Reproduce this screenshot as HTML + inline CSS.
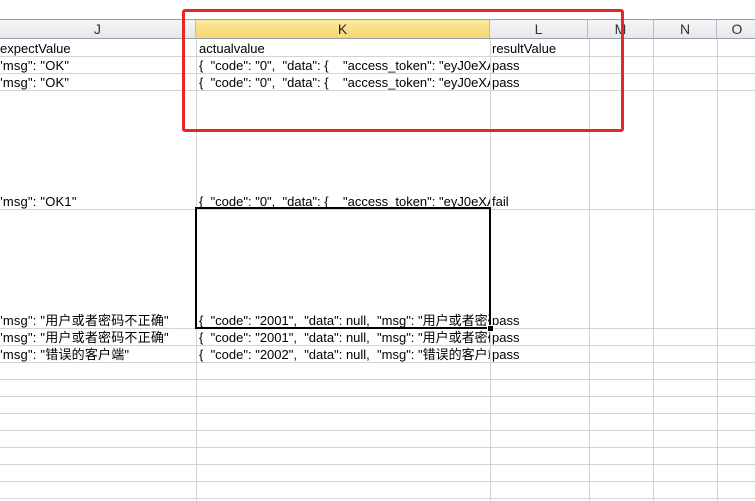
<!DOCTYPE html>
<html><head><meta charset="utf-8"><style>
body{margin:0;width:755px;height:501px;overflow:hidden;background:#fff;font-family:"Liberation Sans","Noto Sans CJK SC",sans-serif;font-size:13px;color:#000;position:relative}
.a{position:absolute}
.h{position:absolute;top:20px;height:19px;background:linear-gradient(#f4f5f7,#e4e7eb);border-right:1px solid #b8bcc2;text-align:center;line-height:19px;font-size:14px;color:#333}
.hl{position:absolute;left:0;width:755px;height:1px;background:#d4d4d4}
.vl{position:absolute;top:39px;width:1px;height:462px;background:#d4d4d4}
.t{position:absolute;white-space:nowrap;overflow:hidden;line-height:15px}
.j{left:-2px;letter-spacing:0.2px}
</style></head><body>
<div class="a" style="left:0;top:19px;width:755px;height:1px;background:#9aa0a8"></div>
<div class="h" style="left:0;width:195px">J</div>
<div class="h" style="left:196px;width:293px;background:linear-gradient(#fbe9a0,#f6d46a);color:#222">K</div>
<div class="h" style="left:490px;width:97px">L</div>
<div class="h" style="left:588px;width:65px">M</div>
<div class="h" style="left:654px;width:62px">N</div>
<div class="h" style="left:717px;width:40px">O</div>
<div class="a" style="left:0;top:38px;width:755px;height:1px;background:#9aa0a8"></div>

<div class="hl" style="top:56px"></div><div class="hl" style="top:73px"></div><div class="hl" style="top:90px"></div>
<div class="hl" style="top:209px"></div><div class="hl" style="top:328px"></div><div class="hl" style="top:345px"></div>
<div class="hl" style="top:362px"></div><div class="hl" style="top:379px"></div><div class="hl" style="top:396px"></div>
<div class="hl" style="top:413px"></div><div class="hl" style="top:430px"></div><div class="hl" style="top:447px"></div>
<div class="hl" style="top:464px"></div><div class="hl" style="top:481px"></div><div class="hl" style="top:498px"></div>
<div class="vl" style="left:196px"></div><div class="vl" style="left:490px"></div><div class="vl" style="left:589px"></div><div class="vl" style="left:653px"></div><div class="vl" style="left:717px"></div>

<div class="t" style="left:0;top:41px">expectValue</div>
<div class="t" style="left:199px;top:41px">actualvalue</div>
<div class="t" style="left:492px;top:41px">resultValue</div>

<div class="t j" style="top:58px">"msg": "OK"</div>
<div class="t" style="left:199px;top:58px;width:291px">{&nbsp; "code": "0",&nbsp; "data": {&nbsp;&nbsp;&nbsp; "access_token": "eyJ0eXAi</div>
<div class="t" style="left:492px;top:58px">pass</div>
<div class="t j" style="top:75px">"msg": "OK"</div>
<div class="t" style="left:199px;top:75px;width:291px">{&nbsp; "code": "0",&nbsp; "data": {&nbsp;&nbsp;&nbsp; "access_token": "eyJ0eXAi</div>
<div class="t" style="left:492px;top:75px">pass</div>

<div class="t j" style="top:194px">"msg": "OK1"</div>
<div class="t" style="left:199px;top:194px;width:291px">{&nbsp; "code": "0",&nbsp; "data": {&nbsp;&nbsp;&nbsp; "access_token": "eyJ0eXAi</div>
<div class="t" style="left:492px;top:194px">fail</div>

<div class="t j" style="top:313px">"msg": "用户或者密码不正确"</div>
<div class="t" style="left:199px;top:313px;width:291px">{&nbsp; "code": "2001",&nbsp; "data": null,&nbsp; "msg": "用户或者密码</div>
<div class="t" style="left:492px;top:313px">pass</div>
<div class="t j" style="top:330px">"msg": "用户或者密码不正确"</div>
<div class="t" style="left:199px;top:330px;width:291px">{&nbsp; "code": "2001",&nbsp; "data": null,&nbsp; "msg": "用户或者密码</div>
<div class="t" style="left:492px;top:330px">pass</div>
<div class="t j" style="top:347px">"msg": "错误的客户端"</div>
<div class="t" style="left:199px;top:347px;width:291px">{&nbsp; "code": "2002",&nbsp; "data": null,&nbsp; "msg": "错误的客户端</div>
<div class="t" style="left:492px;top:347px">pass</div>

<div class="a" style="left:195px;top:207px;width:292px;height:118px;border:2px solid #000"></div>
<div class="a" style="left:487px;top:325px;width:5px;height:5px;background:#000;border:1px solid #fff"></div>

<div class="a" style="left:182px;top:9px;width:436px;height:117px;border:3px solid #e8262a;border-radius:3px"></div>
</body></html>
